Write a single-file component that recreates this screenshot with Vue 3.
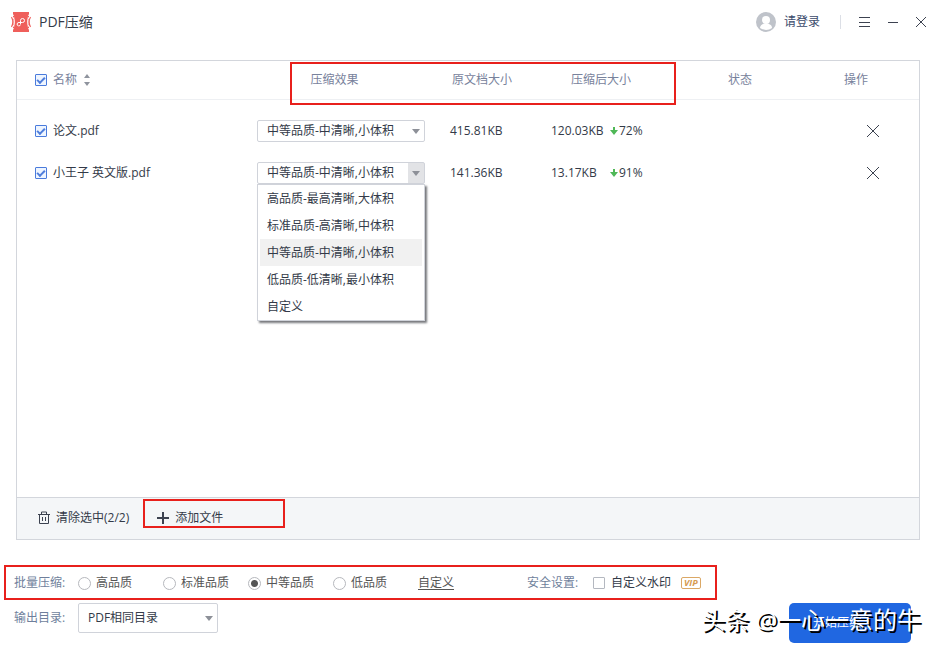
<script setup>
import { ref, computed } from 'vue';

const presets = [
  '高品质-最高清晰,大体积',
  '标准品质-高清晰,中体积',
  '中等品质-中清晰,小体积',
  '低品质-低清晰,最小体积',
  '自定义'
];

const files = ref([
  { name: '论文.pdf', checked: true, preset: 2, size: '415.81KB', result: '120.03KB', ratio: '72%' },
  { name: '小王子 英文版.pdf', checked: true, preset: 2, size: '141.36KB', result: '13.17KB', ratio: '91%' }
]);

const openRow = ref(1);
const batch = ref('中等品质');
const batchOptions = ['高品质', '标准品质', '中等品质', '低品质'];
const watermark = ref(false);

const checkedCount = computed(() => files.value.filter(f => f.checked).length);
const allChecked = computed({
  get: () => files.value.length > 0 && checkedCount.value === files.value.length,
  set: (value) => files.value.forEach(f => { f.checked = value; })
});

const choose = (file, index) => {
  file.preset = index;
  openRow.value = -1;
};

const removeFile = (index) => {
  files.value.splice(index, 1);
};

const clearChecked = () => {
  files.value = files.value.filter(f => !f.checked);
};
</script>

<template>
  <div class="page">
    <header class="titlebar">
      <svg class="logo" width="20" height="20" viewBox="0 0 20 20">
        <path d="M2 0h16v2c-1.500 3-2 5-2 8s.5 5 2 8v2H2v-2c1.500-3 2-5 2-8s-.5-5-2-8z" fill="#ef5f5b" />
        <path d="M.5 5c1.600 3 1.600 7 0 10M19.500 5c-1.600 3-1.600 7 0 10" fill="none" stroke="#ef5f5b" stroke-width="1.200" />
        <path d="M2 4h1.500v12H2zM16.500 4H18v12h-1.500z" fill="#ef5f5b" />
        <path d="M2 5c1.600 3 1.600 7 0 10M18 5c-1.600 3-1.600 7 0 10" fill="none" stroke="#fff" stroke-width="1" />
        <path d="M9.500 12V8.500a2 2 0 1 1 2 2H8a1.700 1.700 0 1 0 1.500 2" fill="none" stroke="#fff" stroke-width="1" />
      </svg>
      <h1>PDF压缩</h1>
      <div class="window-tools">
        <a class="login" href="#">
          <svg width="20" height="20" viewBox="0 0 20 20">
            <circle cx="10" cy="10" r="10" fill="#bfc3ca" />
            <circle cx="10" cy="8" r="4" fill="#fff" />
            <path d="M4 16c0-3 2.500-4.500 6-4.500s6 1.500 6 4.500c-3.500 2.500-8.500 2.500-12 0z" fill="#fff" />
          </svg>
          <span>请登录</span>
        </a>
        <i class="divider"></i>
        <button type="button" aria-label="菜单">
          <svg width="12" height="12" viewBox="0 0 12 12"><path d="M0 1.500h11M0 6.500h11M0 10.500h11" /></svg>
        </button>
        <button type="button" aria-label="最小化">
          <svg width="12" height="12" viewBox="0 0 12 12"><path d="M1 6.500h10" /></svg>
        </button>
        <button type="button" aria-label="关闭">
          <svg width="12" height="12" viewBox="0 0 12 12"><path d="M1 1l10 10M11 1L1 11" /></svg>
        </button>
      </div>
    </header>

    <main class="panel">
      <table>
        <colgroup>
          <col>
          <col class="col-preset">
          <col class="col-size">
          <col class="col-result">
          <col class="col-state">
          <col class="col-action">
        </colgroup>
        <thead>
          <tr>
            <th>
              <label class="name">
                <input v-model="allChecked" type="checkbox" class="check">
                <span>名称</span>
                <svg class="sort" width="8" height="12" viewBox="0 0 8 12"><path d="M4 0l3 4H1zM4 12l3-4H1z" /></svg>
              </label>
            </th>
            <th class="center preset-head">压缩效果</th>
            <th class="size-head">原文档大小</th>
            <th class="result-head">压缩后大小</th>
            <th class="center">状态</th>
            <th class="center action-head">操作</th>
          </tr>
        </thead>
        <tbody>
          <tr v-for="(file, i) in files" :key="file.name">
            <td>
              <label class="name">
                <input v-model="file.checked" type="checkbox" class="check">
                <span>{{ file.name }}</span>
              </label>
            </td>
            <td>
              <div class="dropdown" :class="{ open: openRow === i }">
                <select v-model="file.preset" :aria-label="file.name">
                  <option v-for="(preset, p) in presets" :key="p" :value="p">{{ preset }}</option>
                </select>
                <ul v-if="openRow === i" class="menu" role="listbox">
                  <li
                    v-for="(preset, p) in presets"
                    :key="p"
                    role="option"
                    :aria-selected="p === file.preset"
                    :class="{ active: p === file.preset }"
                    @click="choose(file, p)"
                  >{{ preset }}</li>
                </ul>
              </div>
            </td>
            <td>{{ file.size }}</td>
            <td>
              <div class="result">
                <span class="result-size">{{ file.result }}</span>
                <svg width="8" height="8" viewBox="0 0 8 8"><path d="M3 0h2v3h3L4 8 0 3h3z" fill="#4fb857" /></svg>
                <span>{{ file.ratio }}</span>
              </div>
            </td>
            <td></td>
            <td>
              <button type="button" class="remove" aria-label="删除" @click="removeFile(i)">
                <svg width="12" height="12" viewBox="0 0 12 12"><path d="M0 0l12 12M12 0L0 12" /></svg>
              </button>
            </td>
          </tr>
        </tbody>
      </table>

      <div class="toolbar">
        <button type="button" @click="clearChecked">
          <svg width="12" height="14" viewBox="0 0 12 14"><path d="M0 3.500h12M3.500 3V1h5v2M1.500 3.500v9h9v-9M4.500 6v4M7.500 6v4" /></svg>
          <span>清除选中({{ checkedCount }}/{{ files.length }})</span>
        </button>
        <button type="button" class="add">
          <svg width="12" height="12" viewBox="0 0 12 12"><path d="M6 0v12M0 6h12" stroke-width="2" /></svg>
          <span>添加文件</span>
        </button>
        <i class="mark mark-add"></i>
      </div>
      <i class="mark mark-head"></i>
    </main>

    <footer class="settings">
      <div class="row batch">
        <span class="caption">批量压缩:</span>
        <label v-for="option in batchOptions" :key="option" class="radio">
          <input v-model="batch" type="radio" name="batch" :value="option">
          <span>{{ option }}</span>
        </label>
        <a class="custom" href="#">自定义</a>
        <span class="caption safety">安全设置:</span>
        <label class="stamp">
          <input v-model="watermark" type="checkbox" class="check">
          <span>自定义水印</span>
        </label>
        <span class="vip">VIP</span>
        <i class="mark mark-batch"></i>
      </div>
      <div class="row output">
        <label class="caption" for="output">输出目录:</label>
        <div class="dropdown folder">
          <select id="output">
            <option>PDF相同目录</option>
          </select>
        </div>
        <button type="button" class="start">开始压缩</button>
      </div>
    </footer>

    <div class="watermark">头条 @一心一意的牛</div>
  </div>
</template>

<style>
body {
  margin: 0;
  background: #fff;
}
</style>

<style scoped>
.page {
  position: relative;
  display: flex;
  flex-direction: column;
  box-sizing: border-box;
  min-height: 100vh;
  font: 12px/18px "Open Sans", "Noto Sans CJK SC", sans-serif;
  color: #333a48;
}

button,
select,
input {
  margin: 0;
  font: inherit;
  color: inherit;
}

button {
  padding: 0;
  border: 0;
  background: none;
}

svg {
  flex: none;
  display: block;
}

button svg {
  fill: none;
  stroke: #3c4250;
}

.titlebar {
  display: flex;
  align-items: center;
  height: 44px;
  padding: 0 15px 0 11px;
}

h1 {
  margin: 0 0 0 8px;
  font-size: 14px;
  font-weight: 400;
}

.window-tools {
  display: flex;
  align-items: center;
  gap: 16px;
  margin-left: auto;
}

.login {
  display: flex;
  align-items: center;
  gap: 8px;
  color: #3b4a6b;
  text-decoration: none;
}

.divider {
  width: 1px;
  height: 14px;
  margin: 0 2px 0 4px;
  background: #dcdfe6;
}

.panel {
  position: relative;
  flex: 1;
  display: flex;
  flex-direction: column;
  margin: 16px 22px 0 16px;
  border: 1px solid #d3d6dc;
}

table {
  width: 100%;
  table-layout: fixed;
  border-collapse: separate;
  border-spacing: 0;
}

.col-preset { width: 193px; }
.col-size { width: 101px; }
.col-result { width: 124px; }
.col-state { width: 130px; }
.col-action { width: 114px; }

th,
td {
  padding: 0;
  text-align: left;
  font-weight: 400;
}

th {
  height: 38px;
  border-bottom: 1px solid #eef0f3;
  color: #78829c;
}

td {
  height: 42px;
}

tbody::before {
  content: "";
  display: block;
  height: 10px;
}

th.center {
  text-align: center;
}

th.preset-head {
  padding-right: 38px;
}

th.size-head {
  padding-left: 2px;
}

th.result-head {
  padding-left: 20px;
}

th.action-head {
  padding-right: 12px;
}

.name {
  display: flex;
  align-items: center;
  gap: 6px;
  padding-left: 18px;
}

.sort {
  fill: #8f949e;
}

.check {
  appearance: none;
  box-sizing: border-box;
  flex: none;
  width: 12px;
  height: 12px;
  border: 1px solid #b4b8c0;
  border-radius: 1px;
  background: #fff;
}

.check:checked {
  border-color: #4a7bdc;
  background: #eef5ff;
}

.check:checked::after {
  content: "";
  display: block;
  box-sizing: border-box;
  width: 8px;
  height: 5px;
  margin: 2px 0 0 1px;
  border: solid #4f7edb;
  border-width: 0 0 2px 2px;
  transform: rotate(-45deg);
}

.dropdown {
  position: relative;
  width: 168px;
}

.dropdown::after {
  content: "";
  position: absolute;
  top: 50%;
  right: 5px;
  margin-top: -2px;
  border: solid transparent;
  border-width: 5px 4px 0;
  border-top-color: #8d9098;
  pointer-events: none;
}

select {
  display: block;
  appearance: none;
  box-sizing: border-box;
  width: 100%;
  height: 22px;
  padding: 0 18px 0 9px;
  border: 1px solid #d0d3da;
  border-radius: 2px;
  background: #fff;
}

.open select {
  background: linear-gradient(#e2e3e6, #e2e3e6) right / 16px 100% no-repeat #fff;
}

.menu {
  position: absolute;
  z-index: 2;
  top: 22px;
  left: 0;
  box-sizing: border-box;
  width: 100%;
  margin: 0;
  padding: 0 2px;
  border: 1px solid #d0d3da;
  background: #fff;
  box-shadow: 2px 2px 2px #77797d;
  list-style: none;
}

.menu li {
  padding: 0 7px;
  line-height: 27px;
}

.menu .active {
  background: #f1f1f1;
}

.result {
  display: flex;
  align-items: center;
  gap: 1px;
}

.result-size {
  width: 58px;
}

.remove {
  display: block;
  margin-left: 62px;
}

.toolbar {
  position: relative;
  display: flex;
  align-items: center;
  gap: 28px;
  box-sizing: border-box;
  height: 42px;
  margin-top: auto;
  padding: 0 0 2px 21px;
  border-top: 1px solid #d3d6dc;
  background: #f4f6f8;
}

.toolbar button {
  display: flex;
  align-items: center;
  gap: 6px;
}

.settings {
  padding: 0 31px 9px 14px;
}

.row {
  position: relative;
  display: flex;
  align-items: center;
}

.batch {
  height: 34px;
  margin-top: 26px;
}

.output {
  align-items: flex-start;
  height: 40px;
  margin-top: 3px;
}

.caption {
  width: 64px;
  color: #6f7f9c;
}

.output .caption {
  line-height: 30px;
}

.radio {
  display: flex;
  align-items: center;
  gap: 5px;
  width: 85px;
  color: #555;
}

.radio input {
  appearance: none;
  box-sizing: border-box;
  width: 13px;
  height: 13px;
  border: 1px solid #b6b8bd;
  border-radius: 50%;
}

.radio input:checked {
  background: radial-gradient(circle, #555 3px, #fff 4px);
}

.custom {
  color: #555;
  text-underline-offset: 2px;
}

.safety {
  width: 66px;
  margin-left: 73px;
}

.stamp {
  display: flex;
  align-items: center;
  gap: 6px;
}

.vip {
  margin-left: 10px;
  padding: 0 2px;
  border: 1px solid #dba866;
  border-radius: 2px;
  color: #d69a50;
  font-size: 9px;
  font-style: italic;
  font-weight: 700;
  line-height: 10px;
}

.folder {
  width: 140px;
}

.folder select {
  height: 30px;
}

.start {
  width: 122px;
  height: 40px;
  margin-left: auto;
  padding-left: 24px;
  border-radius: 5px;
  background: #2067e1;
  color: #fff;
  text-align: left;
}

.mark {
  position: absolute;
  z-index: 1;
  box-sizing: border-box;
  border: 2px solid #e8201c;
  pointer-events: none;
}

.mark-head {
  top: 1px;
  left: 273px;
  width: 386px;
  height: 43px;
}

.mark-add {
  top: 1px;
  left: 126px;
  width: 142px;
  height: 29px;
}

.mark-batch {
  top: -1px;
  left: -10px;
  width: 713px;
  height: 35px;
}

.watermark {
  position: absolute;
  right: 21px;
  bottom: 16px;
  color: #fff;
  font-size: 24px;
  line-height: 32px;
  text-shadow: 2px 2px 0 #000;
  white-space: nowrap;
  pointer-events: none;
}
</style>
